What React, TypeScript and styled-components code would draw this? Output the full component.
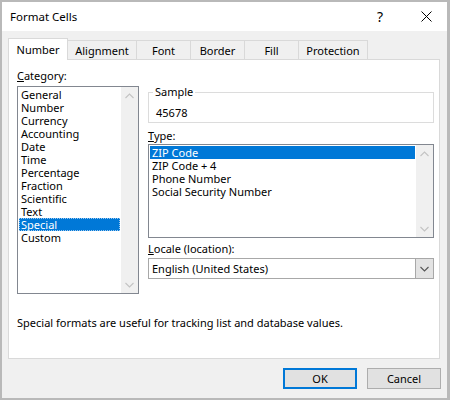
import React from "react";
import styled, { createGlobalStyle } from "styled-components";

const Global = createGlobalStyle`
  html, body { margin: 0; padding: 0; background: #b9b9b9; }
  body {
    width: 450px; height: 400px; overflow: hidden;
    font-family: "Segoe UI", "Noto Sans", "Open Sans", sans-serif;
    font-size: 11px; color: #000;
  }
  #root { padding: 2px 3px 2px 2px; }
`;

const Dialog = styled.div`
  width: 445px;
  height: 396px;
  background: #f0f0f0;
  display: flex;
  flex-direction: column;
`;

const TitleBar = styled.div`
  height: 29px;
  background: #ffffff;
  display: flex;
  align-items: center;
  padding-left: 8px;
`;

const Title = styled.div`
  flex: 1;
  font-size: 11.5px;
  line-height: 16px;
`;

const HelpButton = styled.div`
  width: 30px;
  text-align: center;
  font-size: 14px;
  line-height: 18px;
  padding-left: 2px;
`;

const CloseButton = styled.div`
  width: 42px;
  margin-left: 10px;
  display: flex;
  justify-content: center;
  align-items: center;
`;

const Body = styled.div`
  flex: 1;
  display: flex;
  flex-direction: column;
  padding: 7px 7px 0 6px;
`;

const TabRow = styled.div`
  height: 21px;
  display: flex;
  align-items: flex-end;
`;

const Tab = styled.div<{ $w: number; $active?: boolean }>`
  width: ${(p) => p.$w}px;
  box-sizing: border-box;
  height: ${(p) => (p.$active ? 22 : 19)}px;
  margin-bottom: ${(p) => (p.$active ? -1 : 0)}px;
  margin-left: -1px;
  &:first-child { margin-left: 0; }
  border: 1px solid #d9d9d9;
  border-bottom: none;
  background: ${(p) => (p.$active ? "#ffffff" : "#f0f0f0")};
  position: relative;
  z-index: ${(p) => (p.$active ? 2 : 1)};
  text-align: center;
  line-height: 16px;
  padding-top: ${(p) => (p.$active ? 3 : 2)}px;
`;

const Panel = styled.div`
  height: 300px;
  box-sizing: border-box;
  border: 1px solid #d9d9d9;
  background: #ffffff;
  padding: 8px 5px 0 8px;
  display: flex;
  flex-direction: column;
`;

const Columns = styled.div`
  display: flex;
  gap: 9px;
`;

const LeftCol = styled.div`
  width: 122px;
  display: flex;
  flex-direction: column;
`;

const RightCol = styled.div`
  flex: 1;
  display: flex;
  flex-direction: column;
  padding-top: 16px;
`;

const Label = styled.div<{ $mt?: number }>`
  line-height: 16px;
  margin-top: ${(p) => p.$mt ?? 0}px;
`;

const Key = styled.span`
  text-decoration: underline;
`;

const Group = styled.fieldset`
  margin: 0;
  min-width: 0;
  padding: 0 4px 1px 4px;
  border: 1px solid #dcdcdc;
`;

const Legend = styled.legend`
  padding: 0 2px;
  line-height: 16px;
  margin-left: 0;
`;

const SampleValue = styled.div`
  padding: 5px 0 0 3px;
  line-height: 16px;
`;

const ListBox = styled.div<{ $h: number; $mt?: number }>`
  height: ${(p) => p.$h}px;
  margin-top: ${(p) => p.$mt ?? 0}px;
  box-sizing: border-box;
  border: 1px solid #828790;
  background: #ffffff;
  display: flex;
`;

const Items = styled.div`
  flex: 1;
  padding: 1px;
  display: flex;
  flex-direction: column;
`;

const Item = styled.div<{ $selected?: boolean; $focus?: boolean }>`
  height: 13px;
  line-height: 13px;
  padding-left: 2px;
  box-sizing: border-box;
  white-space: nowrap;
  background: ${(p) => (p.$selected ? "#0078d7" : "transparent")};
  color: ${(p) => (p.$selected ? "#ffffff" : "#000000")};
  outline: ${(p) => (p.$focus ? "1px dotted #9cc8f0" : "none")};
  outline-offset: -1px;
`;

const ScrollBar = styled.div`
  width: 17px;
  background: #f0f0f0;
  display: flex;
  flex-direction: column;
  justify-content: space-between;
`;

const ArrowBox = styled.div`
  height: 17px;
  display: flex;
  align-items: center;
  justify-content: center;
`;

const Select = styled.div`
  margin-top: 1px;
  height: 21px;
  box-sizing: border-box;
  border: 1px solid #a8a8a8;
  background: #ffffff;
  display: flex;
`;

const SelectText = styled.div`
  flex: 1;
  line-height: 19px;
  padding-left: 3px;
`;

const DropButton = styled.div`
  width: 17px;
  background: #e3e3e3;
  border-left: 1px solid #a8a8a8;
  display: flex;
  align-items: center;
  justify-content: center;
`;

const Description = styled.div`
  margin-top: 21px;
  line-height: 16px;
`;

const ButtonRow = styled.div`
  display: flex;
  justify-content: flex-end;
  gap: 10px;
  margin-top: 9px;
  margin-right: -1px;
`;

const Button = styled.button<{ $default?: boolean }>`
  width: 74px;
  height: 21px;
  box-sizing: border-box;
  font: inherit;
  color: #000;
  background: #e1e1e1;
  border: ${(p) => (p.$default ? "2px solid #0078d7" : "1px solid #adadad")};
  padding: 0;
  line-height: 16px;
`;

const Chevron = ({ up, color }: { up?: boolean; color: string }) => (
  <svg width="9" height="6" viewBox="0 0 9 6">
    <polyline
      points={up ? "0.5,5 4.5,1 8.5,5" : "0.5,1 4.5,5 8.5,1"}
      fill="none"
      stroke={color}
      strokeWidth="1.1"
    />
  </svg>
);

const categories = [
  "General", "Number", "Currency", "Accounting", "Date", "Time",
  "Percentage", "Fraction", "Scientific", "Text", "Special", "Custom",
];

const types = ["ZIP Code", "ZIP Code + 4", "Phone Number", "Social Security Number"];

const tabs: [string, number][] = [
  ["Number", 60], ["Alignment", 70], ["Font", 55], ["Border", 55], ["Fill", 55], ["Protection", 70],
];

export default function App() {
  return (
    <>
      <Global />
      <Dialog>
        <TitleBar>
          <Title>Format Cells</Title>
          <HelpButton>?</HelpButton>
          <CloseButton>
            <svg width="11" height="11" viewBox="0 0 11 11">
              <path d="M0.5 0.5 L10.5 10.5 M10.5 0.5 L0.5 10.5" stroke="#000" strokeWidth="1" />
            </svg>
          </CloseButton>
        </TitleBar>
        <Body>
          <TabRow>
            {tabs.map(([t, w], i) => (
              <Tab key={t} $w={w} $active={i === 0}>{t}</Tab>
            ))}
          </TabRow>
          <Panel>
            <Columns>
              <LeftCol>
                <Label><Key>C</Key>ategory:</Label>
                <ListBox $h={208} $mt={2}>
                  <Items>
                    {categories.map((c) => (
                      <Item key={c} $selected={c === "Special"} $focus={c === "Special"}>{c}</Item>
                    ))}
                  </Items>
                  <ScrollBar>
                    <ArrowBox><Chevron up color="#c3c3c3" /></ArrowBox>
                    <ArrowBox><Chevron color="#c3c3c3" /></ArrowBox>
                  </ScrollBar>
                </ListBox>
              </LeftCol>
              <RightCol>
                <Group>
                  <Legend>Sample</Legend>
                  <SampleValue>45678</SampleValue>
                </Group>
                <Label $mt={5}><Key>T</Key>ype:</Label>
                <ListBox $h={94}>
                  <Items>
                    {types.map((t, i) => (
                      <Item key={t} $selected={i === 0}>{t}</Item>
                    ))}
                  </Items>
                  <ScrollBar>
                    <ArrowBox><Chevron up color="#c3c3c3" /></ArrowBox>
                    <ArrowBox><Chevron color="#c3c3c3" /></ArrowBox>
                  </ScrollBar>
                </ListBox>
                <Label $mt={3}><Key>L</Key>ocale (location):</Label>
                <Select>
                  <SelectText>English (United States)</SelectText>
                  <DropButton><Chevron color="#555" /></DropButton>
                </Select>
              </RightCol>
            </Columns>
            <Description>Special formats are useful for tracking list and database values.</Description>
          </Panel>
          <ButtonRow>
            <Button $default>OK</Button>
            <Button>Cancel</Button>
          </ButtonRow>
        </Body>
      </Dialog>
    </>
  );
}
